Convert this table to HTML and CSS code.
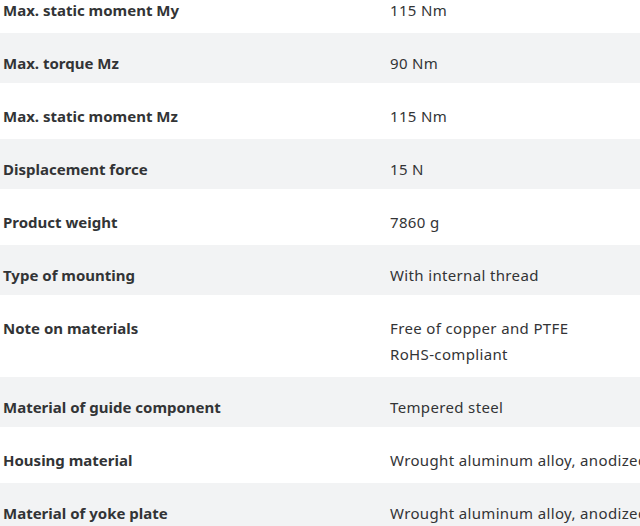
FILE: index.html
```html
<!DOCTYPE html>
<html lang="en">
<head>
<meta charset="utf-8">
<title>Technical data</title>
<link rel="stylesheet" href="styles.css">
</head>
<body>
<table class="specs">
  <tbody>
    <tr class="row"><th class="label">Max. static moment My</th><td class="value">115 Nm</td></tr>
    <tr class="row alt"><th class="label">Max. torque Mz</th><td class="value">90 Nm</td></tr>
    <tr class="row"><th class="label">Max. static moment Mz</th><td class="value">115 Nm</td></tr>
    <tr class="row alt"><th class="label">Displacement force</th><td class="value">15 N</td></tr>
    <tr class="row"><th class="label">Product weight</th><td class="value">7860 g</td></tr>
    <tr class="row alt"><th class="label">Type of mounting</th><td class="value">With internal thread</td></tr>
    <tr class="row"><th class="label">Note on materials</th><td class="value">Free of copper and PTFE<br>RoHS-compliant</td></tr>
    <tr class="row alt"><th class="label">Material of guide component</th><td class="value">Tempered steel</td></tr>
    <tr class="row"><th class="label">Housing material</th><td class="value">Wrought aluminum alloy, anodized</td></tr>
    <tr class="row alt"><th class="label">Material of yoke plate</th><td class="value">Wrought aluminum alloy, anodized</td></tr>
  </tbody>
</table>
</body>
</html>
```

FILE: styles.css
```css
html, body {
  margin: 0;
  padding: 0;
  background: #ffffff;
  overflow: hidden;
}
body {
  font-family: "Noto Sans", "Open Sans", sans-serif;
  font-size: 15px;
  color: #333333;
}
.specs {
  border-collapse: separate;
  border-spacing: 0 3px;
  margin-top: -23px;
  width: 700px;
  table-layout: fixed;
}
.row {
  background: #ffffff;
}
.row.alt {
  background: #f2f3f4;
}
.label, .value {
  padding: 17px 0 7px;
  line-height: 26px;
  vertical-align: top;
  text-align: left;
  white-space: nowrap;
}
.label {
  width: 387px;
  padding-left: 3px;
  font-weight: 700;
  color: #323436;
}
.value {
  font-weight: 400;
  color: #333436;
  letter-spacing: 0.35px;
}
```
